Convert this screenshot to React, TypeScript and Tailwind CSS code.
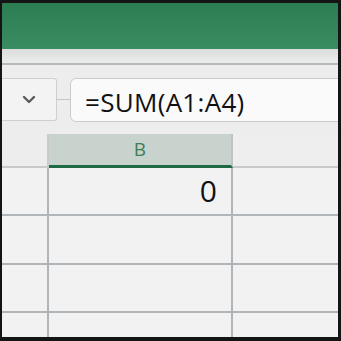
import React from "react";

const font = { fontFamily: '"Segoe UI", "Open Sans", "Liberation Sans", sans-serif' };

const rows = [
  { h: "h-[48px]", value: "0" },
  { h: "h-[49px]", value: "" },
  { h: "h-[48px]", value: "" },
];

export default function App() {
  return (
    <div className="w-[341px] h-[341px] bg-[#141414] pt-[3px] pl-[2px] pr-[3px] pb-[4px] overflow-hidden" style={font}>
      <div className="flex flex-col h-full overflow-hidden">
        {/* ribbon */}
        <div className="h-[46px] bg-gradient-to-b from-[#2c7d52] to-[#3a8d61]" />

        {/* toolbar strip */}
        <div className="h-[16px] bg-gradient-to-b from-[#dcdedd] to-[#eaebeb] border-b-2 border-[#b6b9bb]" />

        {/* formula bar */}
        <div className="h-[69px] bg-[#ededee] pt-[13px] flex items-start">
          <div className="w-[55px] h-[43px] bg-[#f3f3f3] border border-l-0 border-[#cdcfd0] rounded-r-[3px] flex items-center justify-center">
            <svg width="14" height="9" viewBox="0 0 14 9" fill="none">
              <path d="M2 2l5 5 5-5" stroke="#5a5a5a" strokeWidth="2.4" strokeLinecap="round" strokeLinejoin="round" />
            </svg>
          </div>
          <div className="w-[13px] h-[43px] flex items-center">
            <div className="w-full h-px bg-[#c3c5c6]" />
          </div>
          <div className="flex-1 h-[44px] -mr-[10px] bg-[#fafafa] border border-[#c9cbcc] rounded-[6px] flex items-center pl-[14px] pt-[3px]">
            <span className="text-[26px] leading-none tracking-[0.3px] text-[#111]">=SUM(A1:A4)</span>
          </div>
        </div>

        {/* grid */}
        <div className="flex-1 bg-[#f2f2f3] flex flex-col">
          <div className="h-[34px] flex">
            <div className="w-[47px] bg-[#ededed] border-r-2 border-b-2 border-[#c7c9cb]" />
            <div className="w-[184px] bg-[#c8d3cd] border-r-2 border-[#bfc3c6] border-b-[3px] border-b-[#1d6a45] flex items-center justify-center">
              <span className="text-[19px] text-[#3f7d58] leading-none">B</span>
            </div>
            <div className="flex-1 bg-[#eeeeee] border-b-2 border-[#c7c9cb]" />
          </div>
          {rows.map((r, i) => (
            <div key={i} className={`${r.h} flex border-b-2 border-[#b0b5ba]`}>
              <div className="w-[47px] border-r-2 border-[#b0b5ba]" />
              <div className="w-[184px] border-r-2 border-[#b0b5ba] flex items-center justify-end pr-[14px]">
                <span className="text-[30px] leading-none text-[#111]">{r.value}</span>
              </div>
              <div className="flex-1" />
            </div>
          ))}
          <div className="flex-1 flex">
            <div className="w-[47px] border-r-2 border-[#b0b5ba]" />
            <div className="w-[184px] border-r-2 border-[#b0b5ba]" />
            <div className="flex-1" />
          </div>
        </div>
      </div>
    </div>
  );
}
